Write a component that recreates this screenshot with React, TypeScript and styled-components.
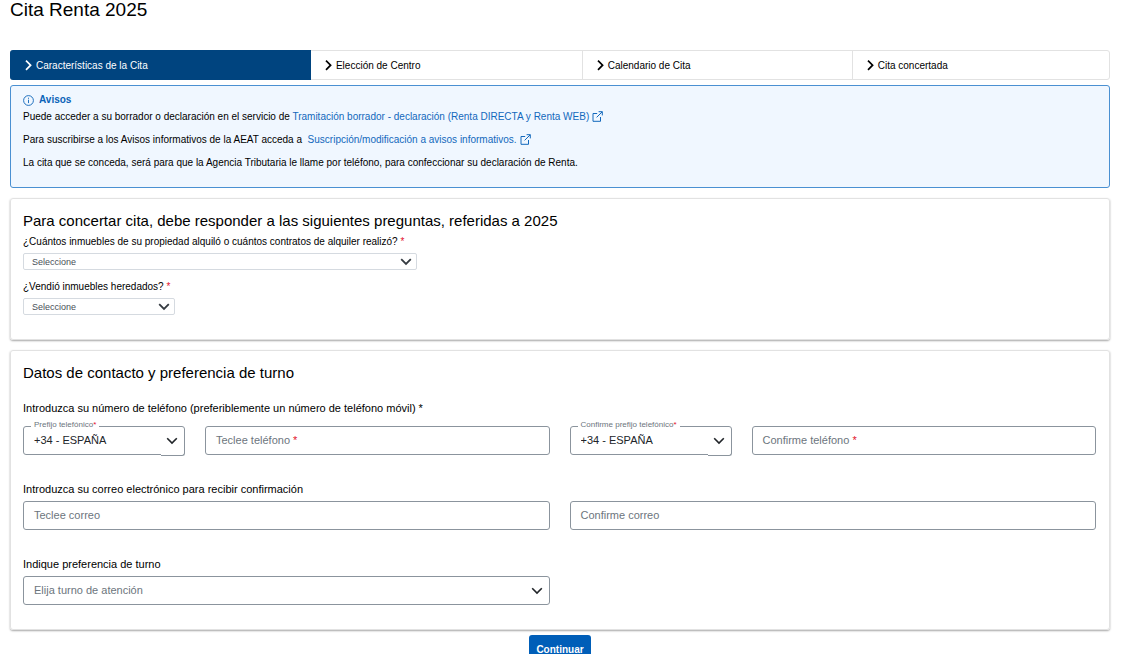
import React from 'react';
import styled, { createGlobalStyle } from 'styled-components';

const GlobalStyle = createGlobalStyle`
  *, *::before, *::after { box-sizing: border-box; }
  body {
    margin: 0;
    background: #fff;
    color: #000;
    font-family: 'Liberation Sans', Arial, sans-serif;
    font-size: 10px;
    line-height: 16px;
  }
  h1, h2, h3, p, ol { margin: 0; padding: 0; font-weight: 400; }
  input, select, button { font-family: inherit; }
`;

const Page = styled.main`
  padding: 0 22px 0 10px;
`;

const Title = styled.h1`
  font-size: 19px;
  line-height: 20px;
  margin-bottom: 30px;
`;

const Steps = styled.ol`
  display: flex;
  list-style: none;
  height: 30px;
  border: 1px solid #e2e2e2;
  border-radius: 3px;
`;

const Step = styled.li<{ $active?: boolean }>`
  flex: 1 1 auto;
  display: flex;
  align-items: center;
  gap: 4px;
  padding: ${p => (p.$active ? '0 2px 0 15px' : '0 0 0 14px')};
  margin: ${p => (p.$active ? '-1px 0 -1px -1px' : '0')};
  border-radius: ${p => (p.$active ? '3px 0 0 3px' : '0')};
  background: ${p => (p.$active ? '#00447f' : 'transparent')};
  color: ${p => (p.$active ? '#fff' : '#000')};
  line-height: 17px;
  & + & + & { border-left: 1px solid #e2e2e2; }
`;

const Notice = styled.section`
  margin-top: 5px;
  min-height: 103px;
  padding: 6px 12px;
  border: 1px solid #4a90d2;
  border-radius: 3px;
  background: #f0f7ff;
`;

const NoticeTitle = styled.h2`
  display: flex;
  align-items: center;
  gap: 5px;
  font-size: 10px;
  line-height: 16px;
  font-weight: 700;
  color: #0a63b8;
`;

const NoticeText = styled.p`
  line-height: 17px;
  margin-bottom: 6px;
`;

const Link = styled.a`
  color: #1268bc;
  text-decoration: none;
  svg { vertical-align: -2px; margin-left: 3px; }
`;

const Card = styled.section`
  padding: 12px 13px 24px 12px;
  border: 1px solid #e2e2e2;
  border-radius: 3px;
  box-shadow: 0 1px 2px rgba(0, 0, 0, 0.35);
  margin-top: 10px;
`;

const CardTitle = styled.h2`
  font-size: 15px;
  line-height: 20px;
  margin-bottom: 1px;
`;

const Questions = styled.div`
  display: flex;
  flex-direction: column;
  gap: 7px;
`;

const Label = styled.label`
  display: block;
  line-height: 20px;
  margin-bottom: 1px;
`;

const GroupLabel = styled.h3<{ $gap: number }>`
  display: block;
  font-size: 11px;
  line-height: 16px;
  margin-bottom: ${p => p.$gap}px;
`;

const Required = styled.span`
  color: #e3122d;
`;

const SelectBox = styled.div<{ $width: string; $compact?: boolean }>`
  position: relative;
  width: ${p => p.$width};
  max-width: 100%;
  height: ${p => (p.$compact ? '17px' : '29px')};
  > svg {
    position: absolute;
    right: ${p => (p.$compact ? '5px' : '7px')};
    top: ${p => (p.$compact ? '5px' : '11px')};
    pointer-events: none;
    z-index: 1;
  }
`;

const Select = styled.select<{ $compact?: boolean; $muted?: boolean }>`
  appearance: none;
  display: block;
  width: 100%;
  height: 100%;
  margin: 0;
  padding: ${p => (p.$compact ? '0 24px 0 8px' : '0 24px 2px 10px')};
  border: 1px solid ${p => (p.$compact ? '#d5dae0' : '#8b949d')};
  border-radius: ${p => (p.$compact ? '2px' : '3px')};
  background: #fff;
  color: ${p => (p.$compact ? '#495057' : p.$muted ? '#6c757d' : '#212529')};
  font-size: ${p => (p.$compact ? '9px' : '11px')};
`;

const ArrowCorner = styled.span`
  position: absolute;
  right: 0;
  top: 4px;
  bottom: -1px;
  width: 24px;
  border: solid #8b949d;
  border-width: 0 1px 1px 0;
  border-radius: 0 0 3px 0;
  background: #fff;
  pointer-events: none;
`;

const NotchLabel = styled.label`
  position: absolute;
  left: 8px;
  top: -6px;
  padding: 0 3px;
  background: #fff;
  color: #6c757d;
  font-size: 8px;
  line-height: 10px;
  white-space: nowrap;
`;

const Columns = styled.div`
  display: grid;
  grid-template-columns: 1fr 1fr;
  gap: 20px;
`;

const PhoneGroup = styled.div`
  display: grid;
  grid-template-columns: 162px 1fr;
  gap: 20px;
`;

const InputBox = styled.div`
  position: relative;
  height: 29px;
`;

const Input = styled.input`
  display: block;
  width: 100%;
  height: 100%;
  margin: 0;
  padding: 0 10px;
  border: 1px solid #8b949d;
  border-radius: 3px;
  background: #fff;
  font-size: 11px;
  &:not(:placeholder-shown) + label { display: none; }
`;

const InnerLabel = styled.label`
  position: absolute;
  left: 11px;
  top: 6px;
  font-size: 11px;
  line-height: 16px;
  color: #6c757d;
  pointer-events: none;
`;

const FieldGroup = styled.div<{ $top: number }>`
  margin-top: ${p => p.$top}px;
`;

const Actions = styled.div`
  display: flex;
  justify-content: center;
  align-items: flex-start;
  height: 24px;
  padding-top: 5px;
  overflow: hidden;
`;

const Submit = styled.button`
  height: 28px;
  min-width: 62px;
  padding: 0 7px;
  border: 0;
  border-radius: 3px;
  background: #005eb8;
  color: #fff;
  font-size: 10px;
  font-weight: 700;
`;

const ChevronRight = () => (
  <svg width="7" height="11" viewBox="0 0 7 11" fill="none" stroke="currentColor" strokeWidth="1.7" aria-hidden="true">
    <path d="M1 0.6l4.6 4.6L1 9.8" />
  </svg>
);

const ChevronDown = ({ color, weight }: { color: string; weight: number }) => (
  <svg width="12" height="8" viewBox="0 0 12 8" fill="none" stroke={color} strokeWidth={weight} aria-hidden="true">
    <path d="M1.2 1.2L6 6l4.8-4.8" />
  </svg>
);

const InfoIcon = () => (
  <svg width="11" height="11" viewBox="0 0 11 11" fill="none" stroke="currentColor" strokeWidth="0.9" aria-hidden="true">
    <circle cx="5.5" cy="5.5" r="4.9" />
    <path d="M5.5 4.7v3.4M5.5 2.7v1.1" />
  </svg>
);

const ExternalIcon = () => (
  <svg width="11" height="11" viewBox="0 0 11 11" fill="none" stroke="currentColor" strokeWidth="1" aria-hidden="true">
    <path d="M5.2 2.5H1v7.8h7.5V6M6.6 0.7h3.7v3.7M10.2 0.8L4.6 6.4" />
  </svg>
);

const steps = ['Características de la Cita', 'Elección de Centro', 'Calendario de Cita', 'Cita concertada'];

const CompactSelect = ({ id, label, width }: { id: string; label: string; width: string }) => (
  <div>
    <Label htmlFor={id}>{label} <Required>*</Required></Label>
    <SelectBox $width={width} $compact>
      <Select id={id} $compact required><option>Seleccione</option></Select>
      <ChevronDown color="#343a40" weight={1.8} />
    </SelectBox>
  </div>
);

const TextField = ({ id, label, type, required }: { id: string; label: string; type: string; required?: boolean }) => (
  <InputBox>
    <Input id={id} type={type} placeholder=" " required={required} />
    <InnerLabel htmlFor={id}>{label}{required && <Required> *</Required>}</InnerLabel>
  </InputBox>
);

const PhoneFields = ({ id, prefix, phone }: { id: string; prefix: string; phone: string }) => (
  <PhoneGroup>
    <SelectBox $width="100%">
      <Select id={`${id}-prefix`} required><option>+34 - ESPAÑA</option></Select>
      <NotchLabel htmlFor={`${id}-prefix`}>{prefix}<Required>*</Required></NotchLabel>
      <ArrowCorner />
      <ChevronDown color="#212529" weight={1.6} />
    </SelectBox>
    <TextField id={id} label={phone} type="tel" required />
  </PhoneGroup>
);

export default function App() {
  return (
    <>
      <GlobalStyle />
      <Page>
        <Title>Cita Renta 2025</Title>
        <Steps>
          {steps.map((step, i) => (
            <Step key={step} $active={i === 0} aria-current={i === 0 ? 'step' : undefined}>
              <ChevronRight />{step}
            </Step>
          ))}
        </Steps>
        <Notice>
          <NoticeTitle><InfoIcon />Avisos</NoticeTitle>
          <NoticeText>
            Puede acceder a su borrador o declaración en el servicio de{' '}
            <Link href="#renta">Tramitación borrador - declaración (Renta DIRECTA y Renta WEB)<ExternalIcon /></Link>
          </NoticeText>
          <NoticeText>
            Para suscribirse a los Avisos informativos de la AEAT acceda a{' \u00a0'}
            <Link href="#avisos">Suscripción/modificación a avisos informativos.<ExternalIcon /></Link>
          </NoticeText>
          <NoticeText>
            La cita que se conceda, será para que la Agencia Tributaria le llame por teléfono, para confeccionar su declaración de Renta.
          </NoticeText>
        </Notice>
        <Card>
          <CardTitle>Para concertar cita, debe responder a las siguientes preguntas, referidas a 2025</CardTitle>
          <Questions>
            <CompactSelect id="rented" label="¿Cuántos inmuebles de su propiedad alquiló o cuántos contratos de alquiler realizó?" width="394px" />
            <CompactSelect id="sold" label="¿Vendió inmuebles heredados?" width="152px" />
          </Questions>
        </Card>
        <Card>
          <CardTitle>Datos de contacto y preferencia de turno</CardTitle>
          <FieldGroup $top={17}>
            <GroupLabel $gap={10}>Introduzca su número de teléfono (preferiblemente un número de teléfono móvil) *</GroupLabel>
            <Columns>
              <PhoneFields id="phone" prefix="Prefijo telefónico" phone="Teclee teléfono" />
              <PhoneFields id="phone-confirm" prefix="Confirme prefijo telefónico" phone="Confirme teléfono" />
            </Columns>
          </FieldGroup>
          <FieldGroup $top={26}>
            <GroupLabel $gap={4}>Introduzca su correo electrónico para recibir confirmación</GroupLabel>
            <Columns>
              <TextField id="mail" label="Teclee correo" type="email" />
              <TextField id="mail-confirm" label="Confirme correo" type="email" />
            </Columns>
          </FieldGroup>
          <FieldGroup $top={26}>
            <GroupLabel as="label" htmlFor="shift" $gap={4}>Indique preferencia de turno</GroupLabel>
            <Columns>
              <SelectBox $width="100%">
                <Select id="shift" $muted><option>Elija turno de atención</option></Select>
                <ChevronDown color="#212529" weight={1.6} />
              </SelectBox>
            </Columns>
          </FieldGroup>
        </Card>
        <Actions>
          <Submit type="button">Continuar</Submit>
        </Actions>
      </Page>
    </>
  );
}
